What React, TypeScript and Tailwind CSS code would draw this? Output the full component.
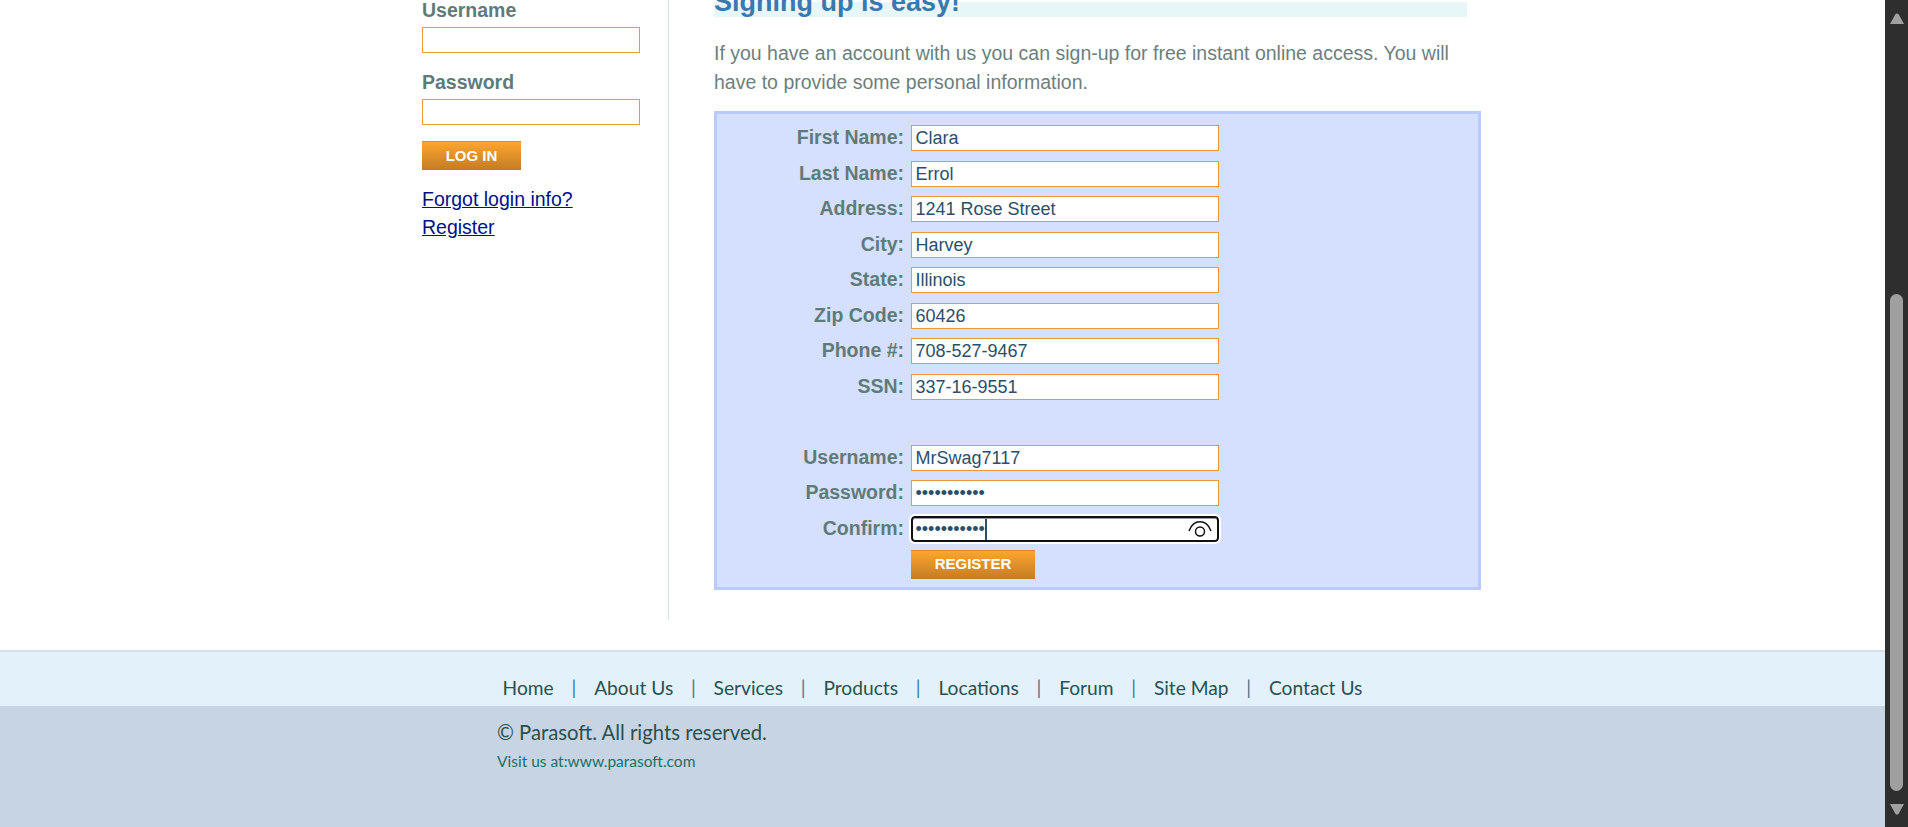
import { Fragment } from "react";

const FIELDS = [
  { label: "First Name:", value: "Clara" },
  { label: "Last Name:", value: "Errol" },
  { label: "Address:", value: "1241 Rose Street" },
  { label: "City:", value: "Harvey" },
  { label: "State:", value: "Illinois" },
  { label: "Zip Code:", value: "60426" },
  { label: "Phone #:", value: "708-527-9467" },
  { label: "SSN:", value: "337-16-9551" },
];

const FOOTER_LINKS = ["Home", "About Us", "Services", "Products", "Locations", "Forum", "Site Map", "Contact Us"];

const DOTS = "•••••••••••";

const inputClass = "h-[26px] w-[308px] border border-[#ec9a34] bg-white px-[3.5px] text-[18px] leading-[24px] text-[#2b4f6b]";
const buttonClass =
  "flex h-[29px] items-center justify-center border-t border-[#e08a22] bg-gradient-to-b from-[#fda52e] to-[#c47c24] text-[15px] font-bold text-white";

function Row({ label, children }: { label: string; children: React.ReactNode }) {
  return (
    <Fragment>
      <div className="pr-[7px] text-right text-[19.5px] font-bold leading-[24px] text-[#5f7b78]">{label}</div>
      <div>{children}</div>
    </Fragment>
  );
}

function EyeIcon() {
  return (
    <svg width="24" height="20" viewBox="0 0 24 20" fill="none" stroke="#111" strokeWidth="1.5">
      <path d="M1 12C3.5 5 8 2.8 12 2.8s8.500 2.200 11 9.200" />
      <circle cx="12" cy="12.500" r="4.500" />
    </svg>
  );
}

function Sidebar() {
  return (
    <aside className="w-[247px] border-r border-[#cfe6e3] text-[19.5px]">
      <div className="mt-[-3px] font-bold leading-[26px] text-[#5f7b78]">Username</div>
      <div className="mt-[4px] h-[26px] w-[218px] border border-[#ec9a34] bg-white" />
      <div className="mt-[16px] font-bold leading-[26px] text-[#5f7b78]">Password</div>
      <div className="mt-[4px] h-[26px] w-[218px] border border-[#ec9a34] bg-white" />
      <button type="button" className={`${buttonClass} mt-[16px] w-[99px]`}>
        LOG IN
      </button>
      <div className="mt-[15px] leading-[28px] text-[#00108a] underline">
        <div>Forgot login info?</div>
        <div>Register</div>
      </div>
    </aside>
  );
}

function RegisterForm() {
  return (
    <main className="ml-[45px] w-[767px]">
      <h1 className="mt-[2px] mr-[14px] h-[15px] bg-[#e7f7f7] text-[27px] font-bold leading-[0px] text-[#3a78ae]">
        Signing up is easy!
      </h1>
      <p className="mt-[22px] text-[19.5px] leading-[29px] text-[#6c7f7c]">
        If you have an account with us you can sign-up for free instant online access. You will have to provide some personal information.
      </p>
      <div className="mt-[14px] grid h-[479px] grid-cols-[194px_1fr] auto-rows-[35.55px] border-[3px] border-[#b9cbfd] bg-[#d4e0fe] pt-[11px]">
        {FIELDS.map((field) => (
          <Row key={field.label} label={field.label}>
            <div className={inputClass}>{field.value}</div>
          </Row>
        ))}
        <div className="col-span-2" />
        <Row label="Username:">
          <div className={inputClass}>MrSwag7117</div>
        </Row>
        <Row label="Password:">
          <div className={inputClass}>{DOTS}</div>
        </Row>
        <Row label="Confirm:">
          <div className="flex h-[26px] w-[308px] items-center justify-between rounded-[4px] border-[2px] border-[#111] bg-white pl-[2.5px] pr-[5px] text-[18px] text-[#2b4f6b] shadow-[inset_0_1px_0_#999] outline outline-[2px] outline-white">
            <span className="flex items-center">
              {DOTS}
              <span className="h-[21px] w-[2px] bg-[#2b4f6b]" />
            </span>
            <EyeIcon />
          </div>
        </Row>
        <div />
        <button type="button" className={`${buttonClass} mt-[-2px] w-[124px]`}>
          REGISTER
        </button>
      </div>
    </main>
  );
}

function Footer() {
  return (
    <footer className="flex-1 font-['Lato','Noto_Sans',sans-serif]">
      <div className="flex h-[56px] items-end justify-center border-t-2 border-[#d3e0ea] bg-[#e3f1fb] pb-[5px] pr-[20px]">
        <ul className="flex text-[19.2px] leading-[26px] text-[#28514f]">
          {FOOTER_LINKS.map((link, i) => (
            <li key={link} className="flex">
              {i > 0 && <span className="px-[17.8px] text-[#3d7a94]">|</span>}
              <span>{link}</span>
            </li>
          ))}
        </ul>
      </div>
      <div className="h-[121px] bg-[#c7d4e4] pl-[497px] pt-[13px]">
        <p className="text-[20.3px] leading-[26px] text-[#28514f]">© Parasoft. All rights reserved.</p>
        <p className="mt-[6px] text-[15.5px] leading-[20px] text-[#1a6f66]">Visit us at:www.parasoft.com</p>
      </div>
    </footer>
  );
}

function Scrollbar() {
  return (
    <div className="flex h-full w-[23px] flex-col items-center bg-[#2e2e2e]">
      <svg className="mt-[13px]" width="14" height="11" viewBox="0 0 14 11">
        <path d="M0 11 L5.500 1 Q7 0 8.500 1 L14 11 Z" fill="#a0a0a0" />
      </svg>
      <div className="mt-[270px] h-[497px] w-[13px] rounded-[7px] bg-[#9f9f9f]" />
      <svg className="mt-[13px]" width="14" height="11" viewBox="0 0 14 11">
        <path d="M0 0 L5.500 10 Q7 11 8.500 10 L14 0 Z" fill="#a0a0a0" />
      </svg>
    </div>
  );
}

export default function App() {
  return (
    <div className="flex h-[827px] w-[1908px] overflow-hidden bg-white font-['Liberation_Sans',Arial,sans-serif]">
      <div className="flex w-[1885px] flex-col">
        <div className="flex h-[650px] pl-[422px]">
          <div className="flex h-[620px]">
            <Sidebar />
            <RegisterForm />
          </div>
        </div>
        <Footer />
      </div>
      <Scrollbar />
    </div>
  );
}
